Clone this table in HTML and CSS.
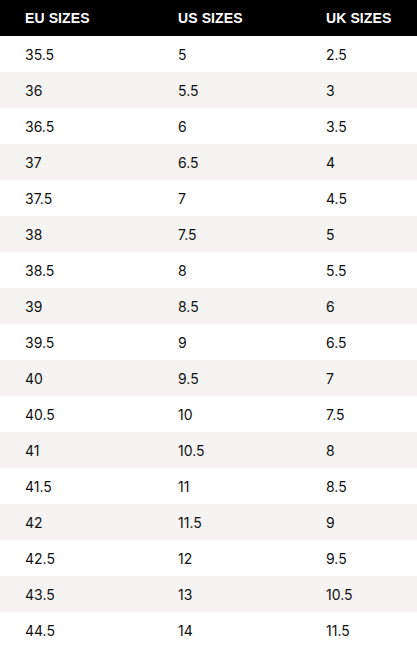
FILE: index.html
```html
<!DOCTYPE html>
<html>
<head>
<meta charset="utf-8">
<link rel="stylesheet" href="styles.css">
</head>
<body>
<div class="table">
  <div class="row head"><div>EU SIZES</div><div>US SIZES</div><div>UK SIZES</div></div>
  <div class="row"><div>35.5</div><div>5</div><div>2.5</div></div>
  <div class="row"><div>36</div><div>5.5</div><div>3</div></div>
  <div class="row"><div>36.5</div><div>6</div><div>3.5</div></div>
  <div class="row"><div>37</div><div>6.5</div><div>4</div></div>
  <div class="row"><div>37.5</div><div>7</div><div>4.5</div></div>
  <div class="row"><div>38</div><div>7.5</div><div>5</div></div>
  <div class="row"><div>38.5</div><div>8</div><div>5.5</div></div>
  <div class="row"><div>39</div><div>8.5</div><div>6</div></div>
  <div class="row"><div>39.5</div><div>9</div><div>6.5</div></div>
  <div class="row"><div>40</div><div>9.5</div><div>7</div></div>
  <div class="row"><div>40.5</div><div>10</div><div>7.5</div></div>
  <div class="row"><div>41</div><div>10.5</div><div>8</div></div>
  <div class="row"><div>41.5</div><div>11</div><div>8.5</div></div>
  <div class="row"><div>42</div><div>11.5</div><div>9</div></div>
  <div class="row"><div>42.5</div><div>12</div><div>9.5</div></div>
  <div class="row"><div>43.5</div><div>13</div><div>10.5</div></div>
  <div class="row"><div>44.5</div><div>14</div><div>11.5</div></div>
</div>
</body>
</html>
```
FILE: styles.css
```css
html, body {
  margin: 0;
  padding: 0;
  background: #fff;
}
body {
  font-family: Inter, "Liberation Sans", sans-serif;
  font-size: 14px;
  color: #111;
}
.table {
  display: flex;
  flex-direction: column;
}
.row {
  display: grid;
  grid-template-columns: 153px 148px 1fr;
  height: 36px;
  align-items: center;
  padding-left: 25px;
}
.row:nth-child(odd) {
  background: #f5f4f2;
}
.row:nth-child(even) {
  background: #fff;
}
.row.head {
  background: #000;
  color: #fff;
  font-family: "Liberation Sans", Arial, sans-serif;
  font-weight: 700;
  font-size: 14px;
  letter-spacing: 0.1px;
}
```
